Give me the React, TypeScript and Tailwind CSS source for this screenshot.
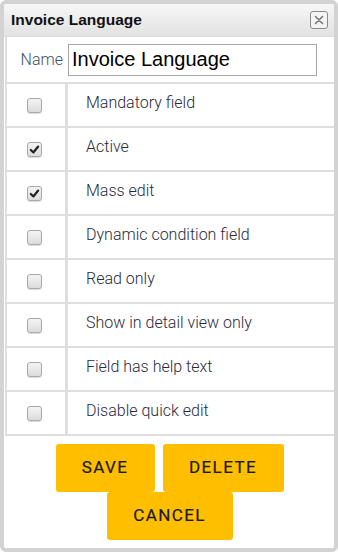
import React, { useState } from 'react';

const fields = [
  { label: 'Mandatory field', checked: false },
  { label: 'Active', checked: true },
  { label: 'Mass edit', checked: true },
  { label: 'Dynamic condition field', checked: false },
  { label: 'Read only', checked: false },
  { label: 'Show in detail view only', checked: false },
  { label: 'Field has help text', checked: false },
  { label: 'Disable quick edit', checked: false },
];

function Box({ checked, onClick }: { checked: boolean; onClick: () => void }) {
  return (
    <button
      onClick={onClick}
      className="w-[15px] h-[15px] rounded-[3px] border border-[#a9a9a9] bg-gradient-to-b from-[#f4f4f4] to-[#dcdcdc] shadow-[0_1px_1px_rgba(0,0,0,0.15)] flex items-center justify-center p-0"
    >
      {checked && (
        <svg width="11" height="11" viewBox="0 0 12 12">
          <path d="M2 6.5 L4.8 9.2 L10 2.8" fill="none" stroke="#222" strokeWidth="2.4" strokeLinecap="round" strokeLinejoin="round" />
        </svg>
      )}
    </button>
  );
}

export default function App() {
  const [name, setName] = useState('Invoice Language');
  const [checks, setChecks] = useState(fields.map((f) => f.checked));

  const toggle = (i: number) =>
    setChecks((prev) => prev.map((c, j) => (j === i ? !c : c)));

  const btn =
    'h-[48px] rounded-[3px] bg-[#ffbf00] text-[17px] font-normal tracking-[1.4px] text-[#1a1a1a] [-webkit-text-stroke:0.2px_#1a1a1a]';

  return (
    <div className="w-[338px] h-[552px] bg-white">
      <div className="w-full h-full border-[4px] border-[#d3d3d3] rounded-[6px] flex flex-col overflow-hidden bg-white">
        {/* header */}
        <div className="h-[33px] shrink-0 flex items-center justify-between pl-[7px] pr-[6px] bg-gradient-to-b from-[#f7f7f7] to-[#e2e2e2] border-b border-[#dcdcdc]">
          <span className="text-[15.5px] font-bold text-[#111] font-['Liberation_Sans',Arial,sans-serif]">
            Invoice Language
          </span>
          <button className="w-[18px] h-[18px] rounded-[3px] border border-[#8a8a8a] bg-[#f4f4f4] flex items-center justify-center p-0">
            <svg width="10" height="10" viewBox="0 0 10 10">
              <path d="M1.5 1.5 L8.5 8.5 M8.5 1.5 L1.5 8.5" stroke="#777" strokeWidth="1.6" strokeLinecap="round" />
            </svg>
          </button>
        </div>

        {/* body */}
        <div className="flex-1 flex flex-col pl-[1px] font-['Roboto',sans-serif]">
          <div className="border-l-[2px] border-[#dedede]">
            <div className="h-[47px] flex items-center border-b-[2px] border-[#dedede]">
              <span className="w-[57px] text-right pr-[1px] text-[16px] font-light text-[#3d5068]">Name</span>
              <input
                value={name}
                onChange={(e) => setName(e.target.value)}
                className="ml-[4px] w-[249px] h-[32px] border border-[#a8a8a8] px-[3px] text-[20px] text-black outline-none font-['Liberation_Sans',Arial,sans-serif]"
              />
            </div>
            {fields.map((f, i) => (
              <div key={f.label} className="h-[44px] flex border-b-[2px] border-[#dedede]">
                <div className="w-[61px] shrink-0 flex items-center justify-center pr-[3px] border-r-[3px] border-[#dedede]">
                  <Box checked={checks[i]} onClick={() => toggle(i)} />
                </div>
                <div className="flex items-center pl-[18px] pb-[4px] text-[16px] font-light text-[#2a2a3c]">
                  {f.label}
                </div>
              </div>
            ))}
          </div>

          <div className="flex flex-wrap justify-center gap-x-[8px] pt-[8px]">
            <button className={`w-[99px] ${btn}`}>SAVE</button>
            <button className={`w-[121px] ${btn}`}>DELETE</button>
            <button className={`w-[126px] ${btn}`}>CANCEL</button>
          </div>
        </div>
      </div>
    </div>
  );
}
